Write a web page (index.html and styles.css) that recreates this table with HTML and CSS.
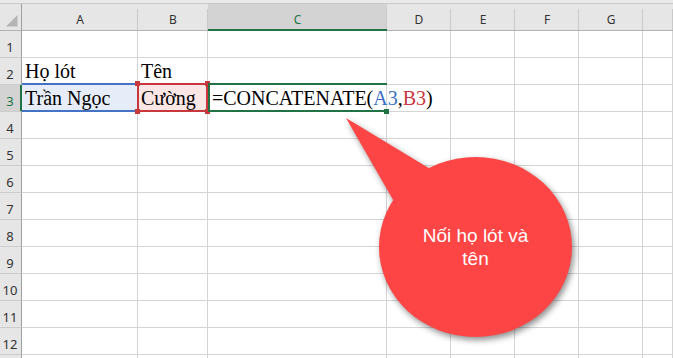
FILE: index.html
```html
<!DOCTYPE html>
<html lang="vi">
<head>
<meta charset="utf-8">
<title>CONCATENATE</title>
<link rel="stylesheet" href="styles.css">
</head>
<body>
<div class="sheet">
  <div class="topbar"></div>
  <div class="row head">
    <div class="corner"><svg width="22" height="26" viewBox="0 0 22 26"><polygon points="6,22.5 17.5,22.5 17.5,11" fill="#b5b5b5"/></svg></div>
    <div class="ch">A</div><div class="ch">B</div><div class="ch sel">C</div><div class="ch">D</div><div class="ch">E</div><div class="ch">F</div><div class="ch">G</div><div class="ch"></div>
  </div>
  <div class="row"><div class="rh">1</div><div class="c"></div><div class="c"></div><div class="c"></div><div class="c"></div><div class="c"></div><div class="c"></div><div class="c"></div><div class="c"></div></div>
  <div class="row"><div class="rh">2</div><div class="c">Họ lót</div><div class="c">Tên</div><div class="c"></div><div class="c"></div><div class="c"></div><div class="c"></div><div class="c"></div><div class="c"></div></div>
  <div class="row"><div class="rh sel">3</div><div class="c ref-a">Trần Ngọc</div><div class="c ref-b">Cường</div><div class="c active">=CONCATENATE(<span class="blue">A3</span>,<span class="red">B3</span>)</div><div class="c"></div><div class="c"></div><div class="c"></div><div class="c"></div><div class="c"></div></div>
  <div class="row"><div class="rh">4</div><div class="c"></div><div class="c"></div><div class="c"></div><div class="c"></div><div class="c"></div><div class="c"></div><div class="c"></div><div class="c"></div></div>
  <div class="row"><div class="rh">5</div><div class="c"></div><div class="c"></div><div class="c"></div><div class="c"></div><div class="c"></div><div class="c"></div><div class="c"></div><div class="c"></div></div>
  <div class="row"><div class="rh">6</div><div class="c"></div><div class="c"></div><div class="c"></div><div class="c"></div><div class="c"></div><div class="c"></div><div class="c"></div><div class="c"></div></div>
  <div class="row"><div class="rh">7</div><div class="c"></div><div class="c"></div><div class="c"></div><div class="c"></div><div class="c"></div><div class="c"></div><div class="c"></div><div class="c"></div></div>
  <div class="row"><div class="rh">8</div><div class="c"></div><div class="c"></div><div class="c"></div><div class="c"></div><div class="c"></div><div class="c"></div><div class="c"></div><div class="c"></div></div>
  <div class="row"><div class="rh">9</div><div class="c"></div><div class="c"></div><div class="c"></div><div class="c"></div><div class="c"></div><div class="c"></div><div class="c"></div><div class="c"></div></div>
  <div class="row"><div class="rh">10</div><div class="c"></div><div class="c"></div><div class="c"></div><div class="c"></div><div class="c"></div><div class="c"></div><div class="c"></div><div class="c"></div></div>
  <div class="row"><div class="rh">11</div><div class="c"></div><div class="c"></div><div class="c"></div><div class="c"></div><div class="c"></div><div class="c"></div><div class="c"></div><div class="c"></div></div>
  <div class="row"><div class="rh">12</div><div class="c"></div><div class="c"></div><div class="c"></div><div class="c"></div><div class="c"></div><div class="c"></div><div class="c"></div><div class="c"></div></div>
  <div class="row"><div class="rh"></div><div class="c"></div><div class="c"></div><div class="c"></div><div class="c"></div><div class="c"></div><div class="c"></div><div class="c"></div><div class="c"></div></div>

  <svg class="callout" width="673" height="358" viewBox="0 0 673 358">
    <g class="bubble">
      <polygon points="346,118 405.8,222 451.3,181.7"/>
      <ellipse cx="475.5" cy="247" rx="96.5" ry="90"/>
    </g>
  </svg>
  <div class="callout-text">Nối họ lót và<br>tên</div>
</div>
</body>
</html>
```

FILE: styles.css
```css
* { box-sizing: border-box; }

html, body {
  margin: 0;
  padding: 0;
  background: #fff;
}

.sheet {
  position: relative;
  width: 673px;
  height: 358px;
  overflow: hidden;
  background: #fff;
}

.topbar {
  height: 4px;
  background: #e9e9e9;
  border-bottom: 1px solid #c9c9c9;
}

.row {
  display: grid;
  grid-template-columns: 22px 116px 70px 179px 64px 64px 64px 64px 30px;
  height: 27px;
}

.corner {
  background: #e6e6e6;
  border-right: 1px solid #9f9f9f;
  border-bottom: 1px solid #b1b1b1;
}
.corner svg { display: block; }

.ch {
  background: linear-gradient(#c9c9c9, #c9c9c9) right bottom / 1px 21px no-repeat, #e6e6e6;
  border-bottom: 1px solid #b1b1b1;
  font: 12px "Noto Sans", "Open Sans", sans-serif;
  color: #333;
  display: flex;
  align-items: flex-end;
  justify-content: center;
  padding-bottom: 2px;
}
.ch.sel {
  background: linear-gradient(#c9c9c9, #c9c9c9) right bottom / 1px 21px no-repeat, #d3d3d3;
  border-bottom-color: #217346;
  box-shadow: inset 0 -1px 0 #217346;
  color: #217346;
}

.rh {
  background: #e6e6e6;
  border-right: 1px solid #9f9f9f;
  border-bottom: 1px solid #cdcdcd;
  font: 13px "Noto Sans", "Open Sans", sans-serif;
  color: #333;
  display: flex;
  align-items: flex-end;
  justify-content: center;
  padding: 0 1px 1px 0;
}
.rh.sel {
  background: #d3d3d3;
  border-right-color: #217346;
  box-shadow: inset -1px 0 0 #217346;
  color: #217346;
}

.c {
  border-right: 1px solid #d4d4d4;
  border-bottom: 1px solid #d4d4d4;
  font: 20px "Liberation Serif", "Times New Roman", serif;
  color: #000;
  display: flex;
  align-items: flex-end;
  padding: 0 0 1px 3px;
  white-space: nowrap;
}

.ref-a, .ref-b, .active {
  position: relative;
  z-index: 2;
}

.ref-a { background: #e7edf8; }
.ref-a::before {
  content: "";
  position: absolute;
  top: -2px; left: 0; right: -1px; bottom: -1px;
  border-top: 2px solid #4472c4;
  border-bottom: 2px solid #4472c4;
}

.ref-b { background: #fbe6e6; }
.ref-b::before {
  content: "";
  position: absolute;
  top: -2px; left: -1px; right: -1px; bottom: -1px;
  border: 2px solid #c8373c;
}
.ref-b::after {
  content: "";
  position: absolute;
  top: -4px; left: -3px; right: -3px; bottom: -3px;
  background:
    linear-gradient(#c8373c, #c8373c) left top / 5px 5px no-repeat,
    linear-gradient(#c8373c, #c8373c) right top / 5px 5px no-repeat,
    linear-gradient(#c8373c, #c8373c) left bottom / 5px 5px no-repeat,
    linear-gradient(#c8373c, #c8373c) right bottom / 5px 5px no-repeat;
}

.active {
  padding-left: 4px;
}
.active::before {
  content: "";
  position: absolute;
  top: -2px; left: 0; right: -1px; bottom: -1px;
  border-top: 2px solid #217346;
  border-left: 2px solid #217346;
  border-bottom: 2px solid #217346;
}
.active::after {
  content: "";
  position: absolute;
  right: -3px; bottom: -3px;
  width: 5px; height: 5px;
  background: #217346;
}

.blue { color: #3c6fc3; }
.red { color: #c8373c; }

.callout {
  position: absolute;
  left: 0;
  top: 0;
  z-index: 5;
  pointer-events: none;
}
.bubble {
  fill: #fe4545;
  filter: drop-shadow(2px 3px 3px rgba(0, 0, 0, 0.45));
}

.callout-text {
  position: absolute;
  z-index: 6;
  left: 379px;
  top: 224px;
  width: 193px;
  text-align: center;
  font: 19px/23px "Liberation Sans", Arial, sans-serif;
  color: #fff;
}
```
